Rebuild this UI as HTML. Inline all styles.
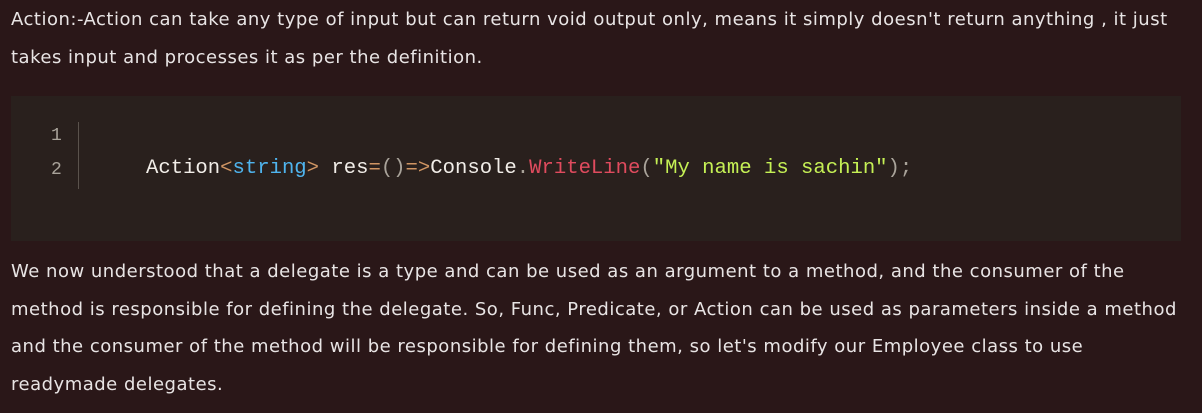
<!DOCTYPE html>
<html><head><style>
html,body{margin:0;padding:0;background:#2a1718;width:1202px;height:413px;overflow:hidden}
body{font-family:"DejaVu Sans",sans-serif;color:#e8e4e4;font-size:18px;letter-spacing:0.5px}
p{margin:0;position:absolute;left:11px;width:1190px;line-height:37.5px;white-space:nowrap}
.code{position:absolute;left:11px;top:96px;width:1170px;height:145px;background:#29201d;letter-spacing:0}
.ln{position:absolute;left:40px;font-family:"Liberation Mono",monospace;font-size:18px;color:#a9a39a}
.bar{position:absolute;left:67px;top:26px;width:1px;height:67px;background:#5a524c}
.src{position:absolute;left:135px;top:58px;font-family:"Liberation Mono",monospace;font-size:20.6px;color:#f1ede8;white-space:pre;line-height:30px}
.o{color:#d09563}.b{color:#4fb4ee}.r{color:#e04b5e}.g{color:#c5f055}.p{color:#a9a39a}
</style></head><body>
<p style="top:1px">Action:-Action can take any type of input but can return void output only, means it simply doesn't return anything , it just<br>takes input and processes it as per the definition.</p>
<div class="code">
<div class="ln" style="top:30px">1</div>
<div class="ln" style="top:64px">2</div>
<div class="bar"></div>
<div class="src">Action<span class="o">&lt;</span><span class="b">string</span><span class="o">&gt;</span> res<span class="o">=</span><span class="p">()</span><span class="o">=&gt;</span>Console<span class="p">.</span><span class="r">WriteLine</span><span class="p">(</span><span class="g">"My name is sachin"</span><span class="p">);</span></div>
</div>
<p style="top:253px">We now understood that a delegate is a type and can be used as an argument to a method, and the consumer of the<br>method is responsible for defining the delegate. So, Func, Predicate, or Action can be used as parameters inside a method<br>and the consumer of the method will be responsible for defining them, so let's modify our Employee class to use<br>readymade delegates.</p>
</body></html>
